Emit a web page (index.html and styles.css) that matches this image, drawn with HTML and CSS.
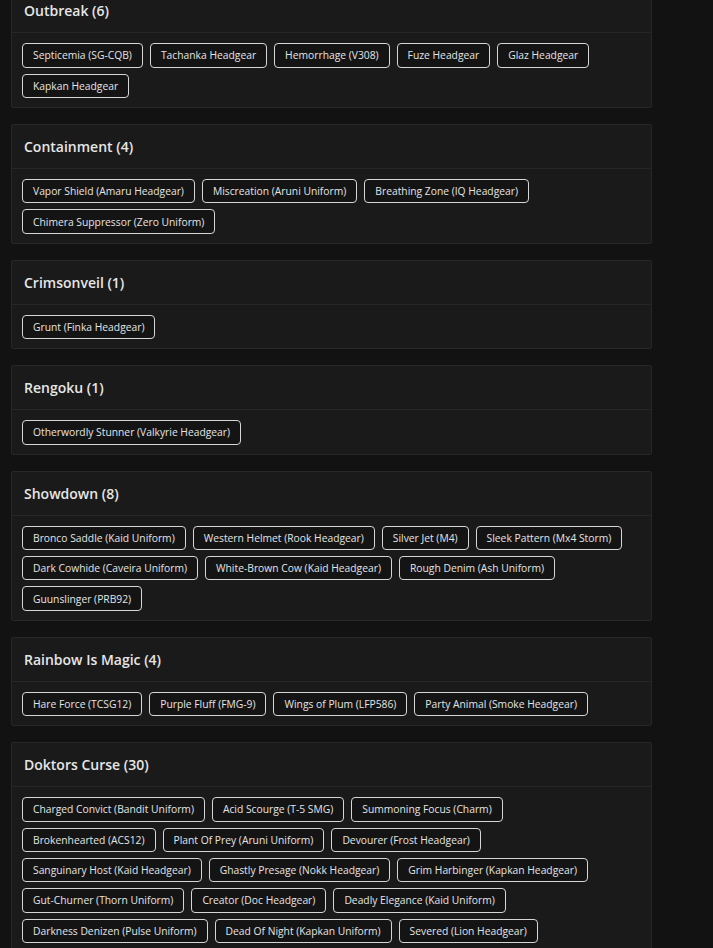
FILE: index.html
```html
<!DOCTYPE html>
<html lang="en">
<head>
<meta charset="utf-8">
<title>Collections</title>
<link rel="stylesheet" href="styles.css">
</head>
<body>
<main class="list">
  <section class="card">
    <header class="card-head"><h2 class="card-title">Outbreak (6)</h2></header>
    <div class="card-body">
      <span class="tag">Septicemia (SG-CQB)</span>
      <span class="tag">Tachanka Headgear</span>
      <span class="tag">Hemorrhage (V308)</span>
      <span class="tag">Fuze Headgear</span>
      <span class="tag">Glaz Headgear</span>
      <span class="tag">Kapkan Headgear</span>
    </div>
  </section>
  <section class="card">
    <header class="card-head"><h2 class="card-title">Containment (4)</h2></header>
    <div class="card-body">
      <span class="tag">Vapor Shield (Amaru Headgear)</span>
      <span class="tag">Miscreation (Aruni Uniform)</span>
      <span class="tag">Breathing Zone (IQ Headgear)</span>
      <span class="tag">Chimera Suppressor (Zero Uniform)</span>
    </div>
  </section>
  <section class="card">
    <header class="card-head"><h2 class="card-title">Crimsonveil (1)</h2></header>
    <div class="card-body">
      <span class="tag">Grunt (Finka Headgear)</span>
    </div>
  </section>
  <section class="card">
    <header class="card-head"><h2 class="card-title">Rengoku (1)</h2></header>
    <div class="card-body">
      <span class="tag">Otherwordly Stunner (Valkyrie Headgear)</span>
    </div>
  </section>
  <section class="card">
    <header class="card-head"><h2 class="card-title">Showdown (8)</h2></header>
    <div class="card-body">
      <span class="tag">Bronco Saddle (Kaid Uniform)</span>
      <span class="tag">Western Helmet (Rook Headgear)</span>
      <span class="tag">Silver Jet (M4)</span>
      <span class="tag">Sleek Pattern (Mx4 Storm)</span>
      <span class="tag">Dark Cowhide (Caveira Uniform)</span>
      <span class="tag">White-Brown Cow (Kaid Headgear)</span>
      <span class="tag">Rough Denim (Ash Uniform)</span>
      <span class="tag">Guunslinger (PRB92)</span>
    </div>
  </section>
  <section class="card">
    <header class="card-head"><h2 class="card-title">Rainbow Is Magic (4)</h2></header>
    <div class="card-body">
      <span class="tag">Hare Force (TCSG12)</span>
      <span class="tag">Purple Fluff (FMG-9)</span>
      <span class="tag">Wings of Plum (LFP586)</span>
      <span class="tag">Party Animal (Smoke Headgear)</span>
    </div>
  </section>
  <section class="card">
    <header class="card-head"><h2 class="card-title">Doktors Curse (30)</h2></header>
    <div class="card-body">
      <span class="tag">Charged Convict (Bandit Uniform)</span>
      <span class="tag">Acid Scourge (T-5 SMG)</span>
      <span class="tag">Summoning Focus (Charm)</span>
      <span class="tag">Brokenhearted (ACS12)</span>
      <span class="tag">Plant Of Prey (Aruni Uniform)</span>
      <span class="tag">Devourer (Frost Headgear)</span>
      <span class="tag">Sanguinary Host (Kaid Headgear)</span>
      <span class="tag">Ghastly Presage (Nokk Headgear)</span>
      <span class="tag">Grim Harbinger (Kapkan Headgear)</span>
      <span class="tag">Gut-Churner (Thorn Uniform)</span>
      <span class="tag">Creator (Doc Headgear)</span>
      <span class="tag">Deadly Elegance (Kaid Uniform)</span>
      <span class="tag">Darkness Denizen (Pulse Uniform)</span>
      <span class="tag">Dead Of Night (Kapkan Uniform)</span>
      <span class="tag">Severed (Lion Headgear)</span>
    </div>
  </section>
</main>
</body>
</html>
```

FILE: styles.css
```css
html, body {
  margin: 0;
  padding: 0;
  background: #121212;
  color: #e2e2e2;
  font-family: "Open Sans", "Liberation Sans", sans-serif;
}

.list {
  width: 641px;
  margin: -11.8px 0 0 11px;
  display: flex;
  flex-direction: column;
  gap: 16px;
}

.card {
  background: #1a1a1a;
  border: 1px solid #272727;
  border-radius: 2px;
}

.card-head {
  height: 43px;
  display: flex;
  align-items: center;
  padding: 0 12px;
  border-bottom: 1px solid #262626;
}

.card-title {
  margin: 0;
  font-size: 14px;
  font-weight: 600;
  color: #e6e6e6;
  letter-spacing: 0;
}

.card-body {
  display: flex;
  flex-wrap: wrap;
  gap: 6px 7px;
  padding: 10px 10px 9px;
}

.tag {
  display: inline-flex;
  align-items: center;
  height: 24.4px;
  box-sizing: border-box;
  padding: 0 10px;
  border: 1px solid #d6d6d6;
  border-radius: 4px;
  background: #141414;
  font-size: 10.3px;
  color: #e4e4e4;
  white-space: nowrap;
}
```
